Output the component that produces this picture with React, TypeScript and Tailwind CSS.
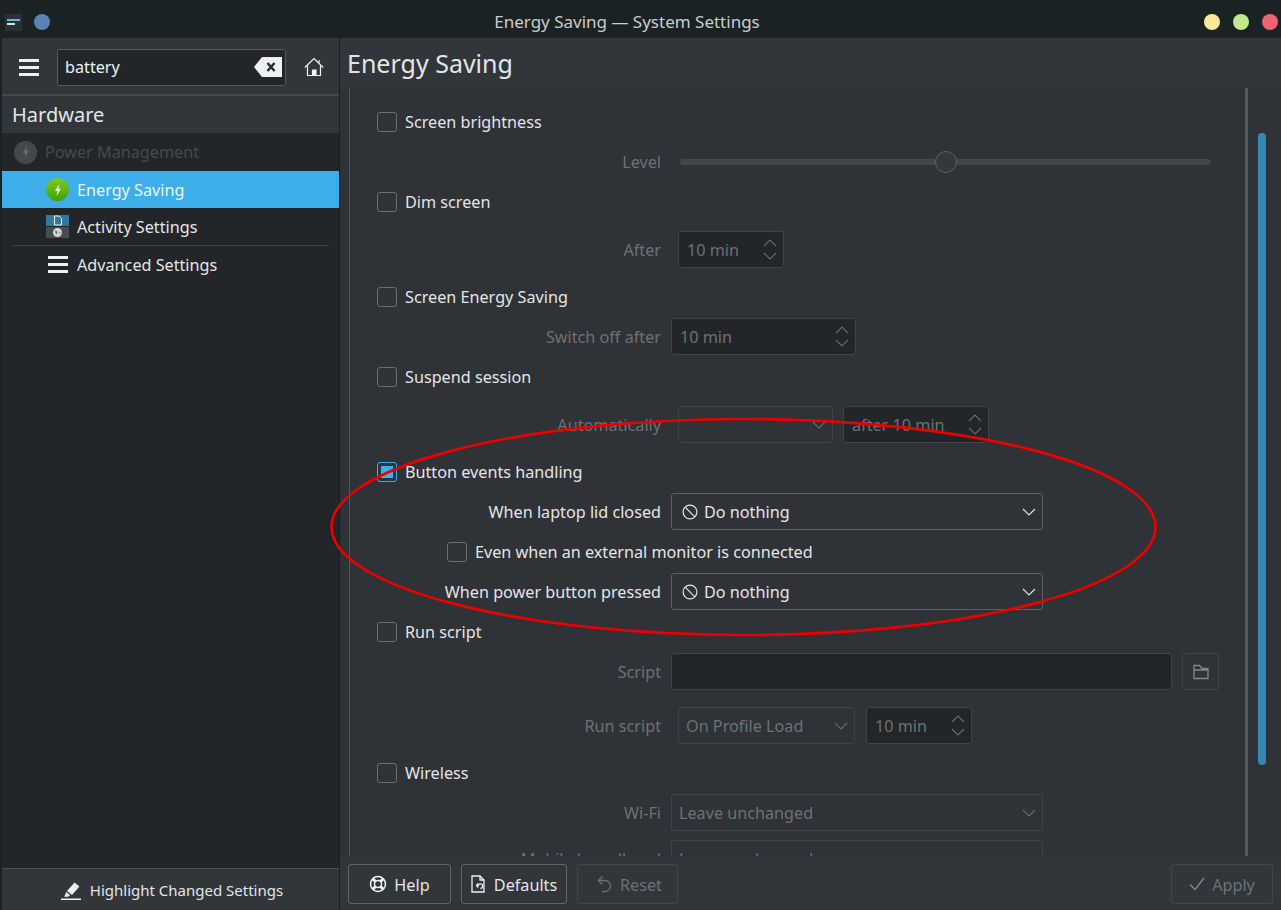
import type { ReactNode } from "react";

const chevron = "M1 1l6 6 6-6";

function Chevron({ up, className }: { up?: boolean; className?: string }) {
  return (
    <svg width="14" height="8" viewBox="0 0 14 8" fill="none" stroke="currentColor" strokeWidth="1.1" className={`${up ? "rotate-180" : ""} ${className ?? ""}`}>
      <path d={chevron} />
    </svg>
  );
}

function Checkbox({ checked }: { checked?: boolean }) {
  return (
    <div className={`w-5 h-5 shrink-0 rounded-[3px] border bg-[#2f3237] flex items-center justify-center ${checked ? "border-[#3daee9] bg-[#253742]" : "border-[#6a6e73]"}`}>
      {checked && <div className="w-3 h-3 bg-[#3daee9]" />}
    </div>
  );
}

function CheckRow({ label, className }: { label: string; className?: string }) {
  return (
    <div className={`h-10 flex items-center gap-2 pl-[27px] text-[#e3e5e7] ${className ?? ""}`}>
      <Checkbox />
      <span>{label}</span>
    </div>
  );
}

function Row({ label, active, className, children }: { label: string; active?: boolean; className?: string; children: ReactNode }) {
  return (
    <div className={`h-10 flex items-center ${className ?? ""}`}>
      <span className={`w-[311px] shrink-0 text-right whitespace-nowrap ${active ? "text-[#e3e5e7]" : "text-[#6d7175]"}`}>{label}</span>
      {children}
    </div>
  );
}

function Spin({ text, className }: { text: string; className: string }) {
  return (
    <div className={`h-[37px] mb-px rounded-[3px] border border-[#3f4449] bg-[#232629] flex items-center justify-between pl-2 pr-[6px] text-[#6d7175] ${className}`}>
      <span className="whitespace-nowrap pt-[2px]">{text}</span>
      <div className="flex flex-col gap-[5px] text-[#686c70]">
        <Chevron up />
        <Chevron />
      </div>
    </div>
  );
}

function Combo({ text, active, className }: { text?: ReactNode; active?: boolean; className: string }) {
  return (
    <div className={`h-[37px] mb-px rounded-[3px] border flex items-center justify-between pl-[7px] pr-[6px] ${active ? "border-[#5d6166] bg-[#2f3338] text-[#e3e5e7]" : "border-[#3f4449] bg-[#2f3237] text-[#6d7175]"} ${className}`}>
      <span className="flex items-center gap-[6px] whitespace-nowrap pt-[2px]">{text}</span>
      <Chevron className={active ? "text-[#e3e5e7]" : "text-[#686c70]"} />
    </div>
  );
}

function DoNothing() {
  return (
    <>
      <svg width="16" height="16" viewBox="0 0 16 16" fill="none" stroke="#e3e5e7" strokeWidth="1.2" className="ml-[3px]">
        <circle cx="8" cy="8" r="6.9" />
        <path d="M3.2 3.2l9.6 9.6" />
      </svg>
      Do nothing
    </>
  );
}

function Bolt({ color }: { color: string }) {
  return (
    <svg width="10" height="12" viewBox="0 0 10 12" fill={color}>
      <path d="M6 0L2 7h2.5L3.5 12 8 4.8H5.4z" />
    </svg>
  );
}

function FootButton({ label, icon, active, className }: { label: string; icon: ReactNode; active?: boolean; className: string }) {
  return (
    <div className={`h-10 rounded-[3px] border flex items-center justify-center gap-[7px] ${active ? "border-[#61666b] text-[#e3e5e7]" : "border-[#42474c] text-[#6d7175]"} ${className}`}>
      {icon}
      <span className="pt-[2px]">{label}</span>
    </div>
  );
}

function Sidebar() {
  return (
    <aside className="w-[337px] ml-[2px] shrink-0 flex flex-col bg-[#232629] text-[#e3e5e7]">
      <div className="h-[58px] bg-[#31363b] border-b-2 border-[#43484d] flex items-center pl-[17px] pt-[2px]">
        <div className="w-[20px] flex flex-col gap-[4px]">
          <div className="h-[3px] bg-[#eff0f1]" />
          <div className="h-[3px] bg-[#eff0f1]" />
          <div className="h-[3px] bg-[#eff0f1]" />
        </div>
        <div className="ml-[18px] w-[229px] h-[37px] rounded-[3px] border border-[#55595e] bg-[#232629] flex items-center justify-between pl-[7px] pr-[3px] text-[#eff0f1]">
          <span>battery</span>
          <svg width="28" height="20" viewBox="0 0 28 20">
            <path d="M8 0H28V20H8L0 10z" fill="#eff0f1" />
            <path d="M13.5 6l7 8M20.5 6l-7 8" stroke="#232629" strokeWidth="2.4" />
          </svg>
        </div>
        <svg width="20" height="20" viewBox="0 0 20 20" fill="none" stroke="#eff0f1" strokeWidth="1.2" className="ml-[18px]">
          <path d="M.8 10.5L10 1.5l9.2 9" />
          <path d="M3.5 8.5V18.5H16.5V8.5" />
          <path d="M15 3v3" />
          <path d="M8.5 18.5v-5.5h3.5v5.5z" fill="#eff0f1" />
        </svg>
      </div>
      <div className="h-[37px] bg-[#31363b] pl-[10px] flex items-center text-[20px]">Hardware</div>
      <div className="h-[38px] flex items-center gap-[8px] pl-[12px] text-[#45494d]">
        <div className="w-[23px] h-[23px] rounded-full bg-[#45484b] flex items-center justify-center"><Bolt color="#6b6e70" /></div>
        Power Management
      </div>
      <div className="h-[37px] bg-[#3daee9] flex items-center gap-[8px] pl-[44px] text-[#eaf6fc]">
        <div className="w-[23px] h-[23px] rounded-full bg-gradient-to-b from-[#7ecb20] to-[#3ea00c] flex items-center justify-center"><Bolt color="#eaffd0" /></div>
        <span className="pt-px">Energy Saving</span>
      </div>
      <div className="h-[37px] flex items-center gap-[8px] pl-[44px]">
        <div className="w-[23px] h-[23px] flex flex-col gap-[1px]">
          <div className="h-[11px] bg-[#33799f] flex justify-center">
            <svg width="8" height="11" viewBox="0 0 8 11"><path d="M.5 1h4.5L7.5 3.5V10H.5z" fill="none" stroke="#e8f0f4" /></svg>
          </div>
          <div className="h-[11px] bg-[#494c50] flex items-center justify-center">
            <svg width="9" height="9" viewBox="0 0 9 9">
              <circle cx="4.5" cy="4.5" r="4.5" fill="#d5d7d9" />
              <path d="M2 2.5l2 .5 .5 2-1.5 1.5zM6 4.5l1.5-.5v2z" fill="#6a6d70" />
            </svg>
          </div>
        </div>
        <span className="pt-px">Activity Settings</span>
      </div>
      <div className="h-px bg-[#3d4146] mx-[10px]" />
      <div className="h-[37px] flex items-center gap-[9px] pl-[46px]">
        <div className="w-[20px] flex flex-col gap-[4px]">
          <div className="h-[3px] bg-[#eff0f1]" />
          <div className="h-[3px] bg-[#eff0f1]" />
          <div className="h-[3px] bg-[#eff0f1]" />
        </div>
        <span className="pt-px">Advanced Settings</span>
      </div>
      <div className="mt-auto h-[42px] bg-[#31363b] border-t border-[#4a4f54] flex items-center justify-center gap-[9px] pl-[3px] pt-[2px] text-[15px]">
        <svg width="20" height="20" viewBox="0 0 20 20" fill="#eff0f1">
          <path d="M13.5 1.5l5 4-7.5 8.5-5-4z" />
          <path d="M5.3 11l3.8 3.2-2 1.6H3.2z" />
          <path d="M0 17.5h20V19H0z" />
        </svg>
        Highlight Changed Settings
      </div>
    </aside>
  );
}

function SettingsForm() {
  return (
    <div className="h-full mx-[9px] mr-[33px] border-l border-r-[3px] border-[#55595e] overflow-hidden relative pt-[14px]">
      <CheckRow label="Screen brightness" />
      <Row label="Level">
        <div className="ml-[19px] w-[531px] h-[6px] rounded-full bg-[#43474b] relative">
          <div className="absolute left-[255px] top-[-8px] w-[22px] h-[22px] rounded-full border border-[#5d6165] bg-[#34383c]" />
        </div>
      </Row>
      <CheckRow label="Dim screen" />
      <Row label="After" className="mt-2">
        <Spin text="10 min" className="ml-[17px] w-[106px]" />
      </Row>
      <CheckRow label="Screen Energy Saving" className="mt-[7px]" />
      <Row label="Switch off after">
        <Spin text="10 min" className="ml-[10px] w-[185px]" />
      </Row>
      <CheckRow label="Suspend session" />
      <Row label="Automatically" className="mt-2">
        <Combo className="ml-[17px] w-[155px]" />
        <Spin text="after 10 min" className="ml-[10px] w-[146px]" />
      </Row>
      <div className="h-10 mt-[7px] flex items-center gap-2 pl-[27px] text-[#e3e5e7]">
        <Checkbox checked />
        <span>Button events handling</span>
      </div>
      <Row label="When laptop lid closed" active>
        <Combo active text={<DoNothing />} className="ml-[10px] w-[372px]" />
      </Row>
      <div className="h-10 flex items-center gap-2 pl-[97px] text-[#e3e5e7]">
        <Checkbox />
        <span>Even when an external monitor is connected</span>
      </div>
      <Row label="When power button pressed" active>
        <Combo active text={<DoNothing />} className="ml-[10px] w-[372px]" />
      </Row>
      <CheckRow label="Run script" />
      <Row label="Script">
        <div className="ml-[10px] w-[501px] h-[37px] mb-px rounded-[3px] border border-[#3f4449] bg-[#232629]" />
        <div className="ml-[10px] w-[37px] h-[37px] mb-px rounded-[3px] border border-[#3f4449] flex items-center justify-center">
          <svg width="16" height="16" viewBox="0 0 16 16" fill="none" stroke="#85888b" strokeWidth="1.3">
            <path d="M1 14.5V1.5h5.5L9 4.5h6v10zM1 6h14" />
          </svg>
        </div>
      </Row>
      <Row label="Run script" className="mt-[14px]">
        <Combo text="On Profile Load" className="ml-[17px] w-[177px]" />
        <Spin text="10 min" className="ml-[11px] w-[106px]" />
      </Row>
      <CheckRow label="Wireless" className="mt-[7px]" />
      <Row label="Wi-Fi">
        <Combo text="Leave unchanged" className="ml-[10px] w-[372px]" />
      </Row>
      <Row label="Mobile broadband" className="mt-[6px]">
        <Combo text="Leave unchanged" className="ml-[10px] w-[372px]" />
      </Row>
    </div>
  );
}

export default function App() {
  return (
    <div className="w-[1281px] h-[910px] relative overflow-hidden flex flex-col bg-[#1b2224] font-['Noto_Sans',sans-serif] text-[16.2px]">
      {/* Title bar */}
      <header className="h-[38px] shrink-0 flex items-center relative pt-[6px] text-[#c9cdcf]">
        <div className="ml-[5px] w-[17px] h-[17px] bg-[#2b3034] flex flex-col justify-center gap-[2px] px-[2px]">
          <div className="h-[2px] bg-[#5fb4e0]" />
          <div className="h-[2px] w-[8px] bg-[#dfe2e4]" />
        </div>
        <div className="ml-[12px] w-4 h-4 rounded-full bg-[#5b82b5]" />
        <div className="flex-1 text-center text-[17px]">Energy Saving — System Settings</div>
        <div className="flex items-center gap-[13px] pr-[3px]">
          <div className="w-4 h-4 rounded-full bg-[#f9e897]" />
          <div className="w-4 h-4 rounded-full bg-[#c2e88d]" />
          <div className="w-4 h-4 rounded-full bg-[#f0626f]" />
        </div>
      </header>

      <div className="flex-1 min-h-0 flex">
        <Sidebar />
        <div className="w-px bg-[#1b1e20]" />
        <main className="flex-1 min-w-0 flex flex-col bg-[#31363b] text-[#e3e5e7]">
          <div className="h-[50px] shrink-0 flex items-center pl-[7px] pt-[2px] text-[25px]">Energy Saving</div>
          <div className="flex-1 min-h-0 relative bg-[#2f3237]">
            <SettingsForm />
            <div className="absolute right-[15px] top-[45px] w-2 h-[632px] rounded-full bg-[#3587b5]" />
          </div>
          <div className="h-[54px] shrink-0 flex items-center pl-2 pr-[8px] pt-[2px] gap-[10px] bg-[#31363b]">
            <FootButton
              active
              label="Help"
              className="w-[103px]"
              icon={
                <svg width="18" height="18" viewBox="0 0 18 18" fill="none" stroke="#eff0f1" strokeWidth="1.5">
                  <circle cx="9" cy="9" r="7.5" />
                  <circle cx="9" cy="9" r="3.5" />
                  <path d="M3.5 3.5l3 3M14.5 3.5l-3 3M3.5 14.5l3-3M14.5 14.5l-3-3" strokeWidth="3" />
                </svg>
              }
            />
            <FootButton
              active
              label="Defaults"
              className="w-[106px]"
              icon={
                <svg width="14" height="18" viewBox="0 0 14 18" fill="none" stroke="#eff0f1" strokeWidth="1.3" className="mr-[2px]">
                  <path d="M1 1h8l4 4v12H1zM9 1v4h4" />
                  <path d="M9.5 13.5a2.3 2.3 0 1 0-2.3-3H5.5M7.2 8.5l-1.7 2 1.7 2" />
                </svg>
              }
            />
            <FootButton
              label="Reset"
              className="w-[101px] pl-1"
              icon={
                <svg width="15" height="18" viewBox="0 0 15 18" fill="none" stroke="#6d7175" strokeWidth="1.3" className="mr-px">
                  <path d="M5.5 1.5L1.5 5.5l4 4M1.5 5.5H8a5.5 5.5 0 0 1 0 11H5" />
                </svg>
              }
            />
            <FootButton
              label="Apply"
              className="w-[102px] ml-auto"
              icon={
                <svg width="16" height="14" viewBox="0 0 16 14" fill="none" stroke="#85888b" strokeWidth="1.3">
                  <path d="M1 7.5l5 5L15 1" />
                </svg>
              }
            />
          </div>
        </main>
      </div>

      {/* Hand-drawn annotation over the window */}
      <svg className="absolute left-0 top-0 pointer-events-none" width="1281" height="910" fill="none">
        <ellipse cx="743.5" cy="527" rx="412" ry="108" stroke="#ee0000" strokeWidth="2.6" />
      </svg>
    </div>
  );
}
